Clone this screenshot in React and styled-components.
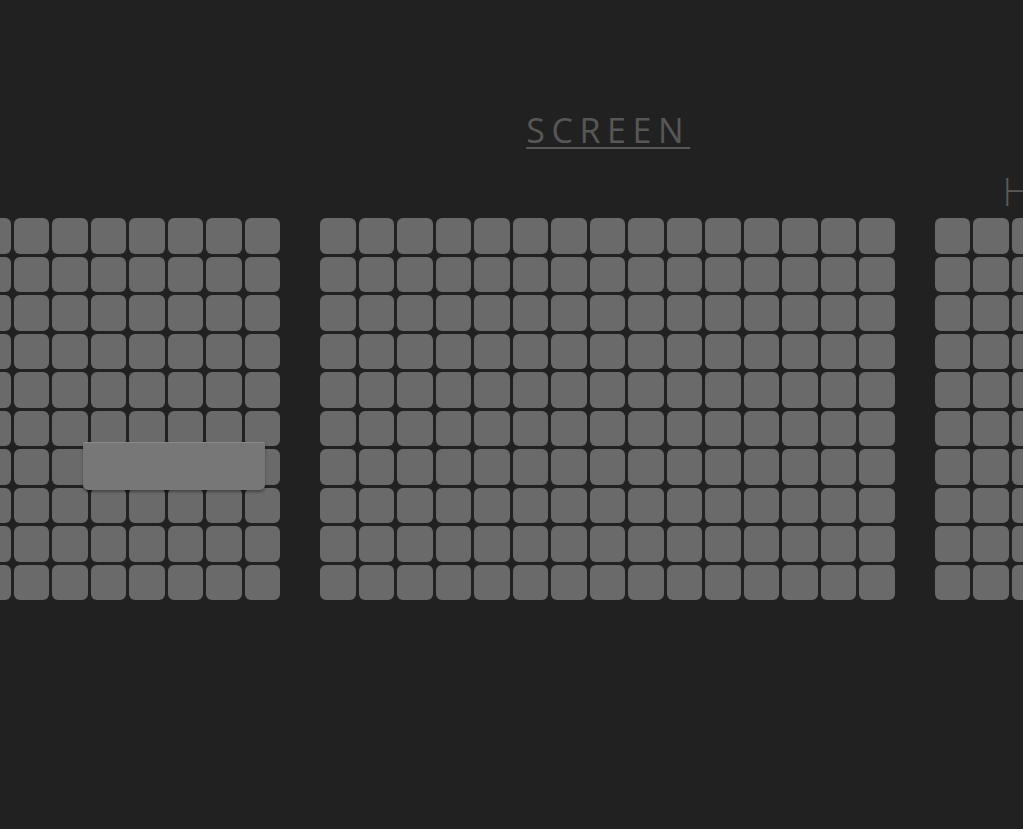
import React from "react";
import styled, { createGlobalStyle } from "styled-components";

const ROWS = 10;

const sections = [
  { id: "left", cols: 8, label: null },
  { id: "middle", cols: 15, label: "SCREEN" },
  { id: "right", cols: 8, label: "H" },
];

export default function App() {
  return (
    <>
      <GlobalStyle />
      <Page>
        <Hall>
          {sections.map((s) => (
            <Section key={s.id}>
              {s.id === "middle" && (
                <ScreenSlot>
                  <ScreenLabel>SCREEN</ScreenLabel>
                </ScreenSlot>
              )}
              {s.id === "right" && (
                <SideSlot>
                  <SideLabel>{s.label}</SideLabel>
                </SideSlot>
              )}
              {s.id === "left" && <EmptySlot />}
              <SeatGrid $cols={s.cols}>
                {Array.from({ length: s.cols * ROWS }).map((_, i) => (
                  <Seat key={i} />
                ))}
                {s.id === "left" && <SeatPopup />}
              </SeatGrid>
            </Section>
          ))}
        </Hall>
      </Page>
    </>
  );
}

const GlobalStyle = createGlobalStyle`
  html, body {
    margin: 0;
    padding: 0;
    background: #212121;
  }
  body {
    font-family: "Open Sans", "Liberation Sans", sans-serif;
  }
`;

const Page = styled.div`
  width: 100%;
  height: 829px;
  overflow: hidden;
  background: #212121;
`;

const Hall = styled.div`
  display: flex;
  gap: 40px;
  margin-left: -25px;
  width: max-content;
`;

const Section = styled.div`
  display: flex;
  flex-direction: column;
`;

const EmptySlot = styled.div`
  height: 218px;
`;

const ScreenSlot = styled.div`
  height: 218px;
  display: flex;
  justify-content: center;
  padding-top: 107px;
  box-sizing: border-box;
`;

const ScreenLabel = styled.span`
  font-size: 34px;
  line-height: 46px;
  letter-spacing: 6.6px;
  color: #575757;
  text-decoration: underline;
  text-decoration-thickness: 2px;
  text-underline-offset: 4px;
  padding-left: 2px;
`;

const SideSlot = styled.div`
  height: 218px;
  padding: 168px 0 0 68px;
  box-sizing: border-box;
`;

const SideLabel = styled.span`
  font-size: 38px;
  line-height: 46px;
  color: #5a5a5a;
  font-weight: 300;
`;

const SeatGrid = styled.div`
  position: relative;
  display: grid;
  grid-template-columns: repeat(${(p) => p.$cols}, 35.5px);
  grid-auto-rows: 35.5px;
  gap: 3px;
  filter: blur(0.5px);
`;

const Seat = styled.div`
  background: #6a6a6a;
  border-radius: 6px;
`;

const SeatPopup = styled.div`
  position: absolute;
  left: 108px;
  top: 224px;
  width: 182px;
  height: 47px;
  background: #777777;
  border-top: 1px solid #8a8a8a;
  border-radius: 2px 2px 5px 5px;
  box-shadow: 0 2px 3px rgba(0, 0, 0, 0.35);
`;
